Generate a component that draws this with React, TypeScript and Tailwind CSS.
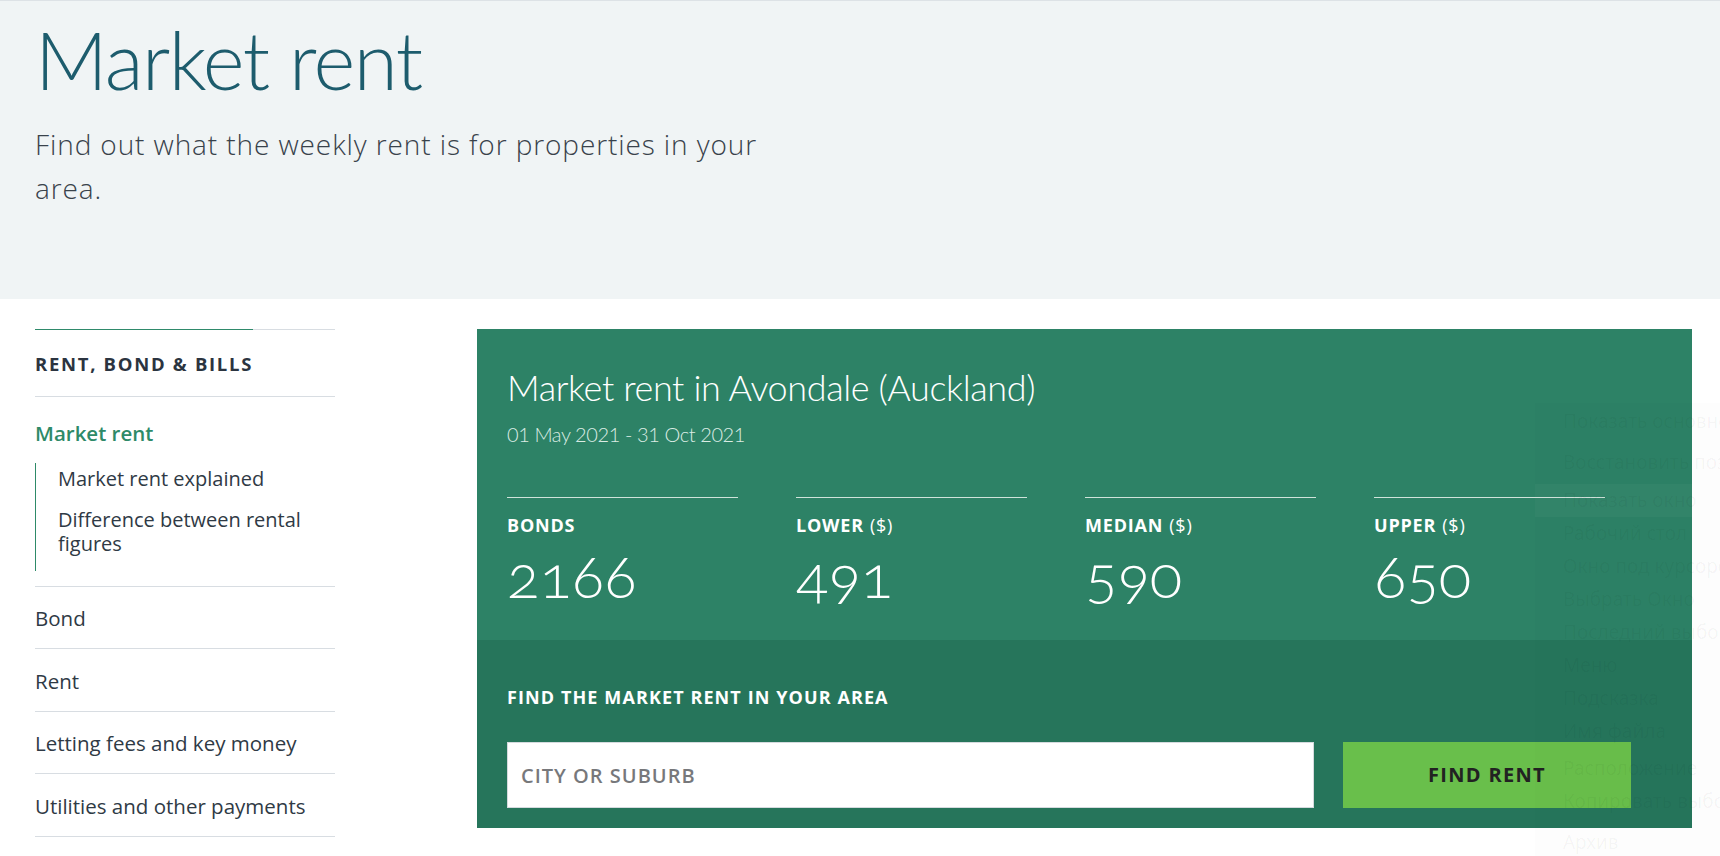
import React from "react";

const stats = [
  { label: "BONDS", unit: "", value: "2166" },
  { label: "LOWER", unit: "($)", value: "491" },
  { label: "MEDIAN", unit: "($)", value: "590" },
  { label: "UPPER", unit: "($)", value: "650" },
];

const navItems = ["Bond", "Rent", "Letting fees and key money", "Utilities and other payments"];

const ghostItems = [
  { t: "Показать основное окно", gap: 0 },
  { t: "Восстановить позицию", gap: 8 },
  { t: "Показать окно", gap: 5, hl: true },
  { t: "Рабочий стол", gap: 0 },
  { t: "Окно под курсором", gap: 0 },
  { t: "Выбрать Окно", gap: 0 },
  { t: "Последний выбор", gap: 0 },
  { t: "Меню", gap: 0 },
  { t: "Подсказка", gap: 0 },
  { t: "Имя файла", gap: 0 },
  { t: "Расположение", gap: 4 },
  { t: "Копировать выбор", gap: 0 },
  { t: "Архив", gap: 8 },
];

export default function App() {
  return (
    <div className="relative min-h-[856px] overflow-hidden bg-white font-['Open_Sans',sans-serif] text-[#2f3a45]">
      <header className="h-[299px] border-t border-[#dde2e6] bg-[#f0f4f5] pl-[35px]">
        <h1 className="pt-[10px] font-['Lato',sans-serif] text-[80px] font-light leading-[96px] tracking-[-1.5px] text-[#1d5c6d]">
          Market rent
        </h1>
        <p className="mt-[15px] text-[28px] font-light leading-[44px] tracking-[0.9px] text-[#39424b]">
          Find out what the weekly rent is for properties in your
          <br />
          area.
        </p>
      </header>

      <main className="flex pl-[35px] pt-[30px]">
        <nav className="w-[300px]">
          <div className="flex h-px">
            <div className="w-[218px] bg-[#2f8a6b]" />
            <div className="flex-1 bg-[#d8dde2]" />
          </div>
          <div className="flex h-[67px] items-center border-b border-[#d8dde2] pt-[2px] text-[18.5px] font-bold tracking-[1.7px] text-[#2b3440]">
            RENT, BOND &amp; BILLS
          </div>
          <div className="border-b border-[#d8dde2] pb-[15px]">
            <div className="pt-[22px] text-[20.5px] font-semibold leading-[28px] text-[#2e8a68]">Market rent</div>
            <div className="mt-[16px] border-l border-[#2e8a68] pl-[22px] text-[20px] leading-[24.5px]">
              <div className="pt-[4px]">Market rent explained</div>
              <div className="mt-[16px] pb-[14px]">Difference between rental figures</div>
            </div>
          </div>
          {navItems.map((n) => (
            <div
              key={n}
              className="flex h-[62.5px] items-center border-b border-[#d8dde2] pt-[2px] text-[20.5px] leading-[28px]"
            >
              {n}
            </div>
          ))}
        </nav>

        <section className="ml-[142px] w-[1215px]">
          <div className="h-[311px] bg-[#2d8266] pl-[30px] pt-[37px] text-white">
            <h2 className="font-['Lato',sans-serif] text-[36px] font-light leading-[43px] tracking-[-0.4px]">
              Market rent in Avondale (Auckland)
            </h2>
            <div className="mt-[13px] font-['Lato',sans-serif] text-[20px] font-light leading-[24px] tracking-[-0.4px] text-[#dbece4]">
              01 May 2021 - 31 Oct 2021
            </div>
            <div className="mt-[51px] flex gap-[58px]">
              {stats.map((s) => (
                <div key={s.label} className="w-[231px] border-t border-[#cfe3da]">
                  <div className="mt-[15px] text-[18px] font-bold leading-[24px] tracking-[0.8px]">
                    {s.label}
                    {s.unit && <span className="ml-[6px] font-normal">{s.unit}</span>}
                  </div>
                  <div className="mt-[2px] font-['Lato',sans-serif] text-[60px] font-light leading-[72px] [font-feature-settings:'onum']">
                    {s.value}
                  </div>
                </div>
              ))}
            </div>
          </div>
          <div className="h-[188px] bg-[#26755b] pl-[30px] pt-[45px]">
            <div className="text-[18px] font-bold leading-[24px] tracking-[1.1px] text-white">
              FIND THE MARKET RENT IN YOUR AREA
            </div>
            <div className="mt-[33px] flex">
              <input
                placeholder="CITY OR SUBURB"
                className="h-[66px] w-[807px] border border-[#d5dade] bg-white px-[13px] text-[20px] font-semibold tracking-[1px] text-[#333] outline-none placeholder:text-[#77787b]"
              />
              <button className="ml-[29px] h-[66px] w-[288px] bg-[#69bf4b] text-[20px] font-bold tracking-[1.3px] text-[#222]">
                FIND RENT
              </button>
            </div>
          </div>
        </section>
      </main>

      <div className="pointer-events-none absolute left-[1535px] top-[403px] w-[185px] overflow-hidden bg-black/[0.008] pt-[2px] font-['Noto_Sans',sans-serif] text-[19px] text-black/[0.045]">
        {ghostItems.map((g) => (
          <div
            key={g.t}
            style={{ marginTop: g.gap }}
            className={`flex h-[33px] items-center whitespace-nowrap pl-[28px] ${g.hl ? "bg-white/[0.03]" : ""}`}
          >
            {g.t}
          </div>
        ))}
      </div>
    </div>
  );
}
